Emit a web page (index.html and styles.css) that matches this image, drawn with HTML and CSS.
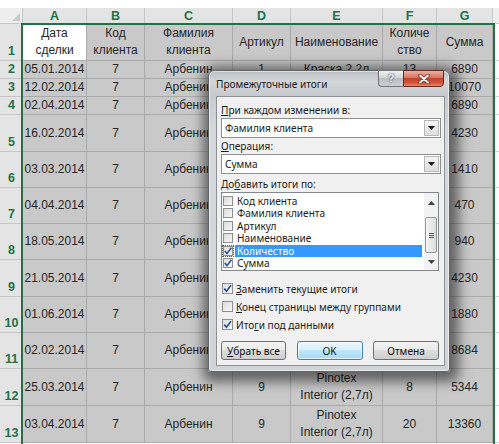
FILE: index.html
```html
<!DOCTYPE html>
<html lang="ru">
<head>
<meta charset="utf-8">
<title>Промежуточные итоги</title>
<link rel="stylesheet" href="styles.css">
</head>
<body>
<div class="page">
  <div class="sheet">
    <div class="corner"></div>
    <div class="ch">A</div><div class="ch">B</div><div class="ch">C</div><div class="ch">D</div><div class="ch">E</div><div class="ch">F</div><div class="ch">G</div><div class="chf"></div>

    <div class="rh">1</div>
    <div class="c a1">Дата<br>сделки</div><div class="c">Код<br>клиента</div><div class="c">Фамилия<br>клиента</div><div class="c">Артикул</div><div class="c">Наименование</div><div class="c">Количе<br>ство</div><div class="c">Сумма</div><div class="f"></div>

    <div class="rh">2</div>
    <div class="c">05.01.2014</div><div class="c">7</div><div class="c">Арбенин</div><div class="c">1</div><div class="c">Краска 2,2л</div><div class="c">13</div><div class="c">6890</div><div class="f"></div>

    <div class="rh">3</div>
    <div class="c">12.02.2014</div><div class="c">7</div><div class="c">Арбенин</div><div class="c"></div><div class="c"></div><div class="c"></div><div class="c">10070</div><div class="f"></div>

    <div class="rh">4</div>
    <div class="c">02.04.2014</div><div class="c">7</div><div class="c">Арбенин</div><div class="c"></div><div class="c"></div><div class="c"></div><div class="c">6890</div><div class="f"></div>

    <div class="rh">5</div>
    <div class="c">16.02.2014</div><div class="c">7</div><div class="c">Арбенин</div><div class="c"></div><div class="c"></div><div class="c"></div><div class="c">4230</div><div class="f"></div>

    <div class="rh">6</div>
    <div class="c">03.03.2014</div><div class="c">7</div><div class="c">Арбенин</div><div class="c"></div><div class="c"></div><div class="c"></div><div class="c">1410</div><div class="f"></div>

    <div class="rh">7</div>
    <div class="c">04.04.2014</div><div class="c">7</div><div class="c">Арбенин</div><div class="c"></div><div class="c"></div><div class="c"></div><div class="c">470</div><div class="f"></div>

    <div class="rh">8</div>
    <div class="c">18.05.2014</div><div class="c">7</div><div class="c">Арбенин</div><div class="c"></div><div class="c"></div><div class="c"></div><div class="c">940</div><div class="f"></div>

    <div class="rh">9</div>
    <div class="c">21.05.2014</div><div class="c">7</div><div class="c">Арбенин</div><div class="c"></div><div class="c"></div><div class="c"></div><div class="c">4230</div><div class="f"></div>

    <div class="rh">10</div>
    <div class="c">01.06.2014</div><div class="c">7</div><div class="c">Арбенин</div><div class="c"></div><div class="c"></div><div class="c"></div><div class="c">1880</div><div class="f"></div>

    <div class="rh">11</div>
    <div class="c">02.02.2014</div><div class="c">7</div><div class="c">Арбенин</div><div class="c"></div><div class="c"></div><div class="c"></div><div class="c">8684</div><div class="f"></div>

    <div class="rh">12</div>
    <div class="c">25.03.2014</div><div class="c">7</div><div class="c">Арбенин</div><div class="c">9</div><div class="c">Pinotex<br>Interior (2,7л)</div><div class="c">8</div><div class="c">5344</div><div class="f"></div>

    <div class="rh">13</div>
    <div class="c">03.04.2014</div><div class="c">7</div><div class="c">Арбенин</div><div class="c">9</div><div class="c">Pinotex<br>Interior (2,7л)</div><div class="c">20</div><div class="c">13360</div><div class="f"></div>

    <div class="sel"></div>
  </div>

  <div class="dialog">
    <div class="titlebar">
      <div class="title">Промежуточные итоги</div>
      <div class="tbtns">
        <div class="help">?</div>
        <div class="close">
          <svg width="12" height="10" viewBox="0 0 12 10"><path d="M2 1.5 L10 8.5 M10 1.5 L2 8.5" stroke="#6a2418" stroke-width="3.6" stroke-linecap="round" fill="none"/><path d="M2 1.5 L10 8.5 M10 1.5 L2 8.5" stroke="#ffffff" stroke-width="2" stroke-linecap="round" fill="none"/></svg>
        </div>
      </div>
    </div>
    <div class="client">
      <div class="label"><u>П</u>ри каждом изменении в:</div>
      <div class="combo"><span class="cval">Фамилия клиента</span><div class="drop"><svg width="7" height="4" viewBox="0 0 7 4"><polygon points="0,0 7,0 3.5,4" fill="#1a1a1a"/></svg></div></div>
      <div class="label l2"><u>О</u>перация:</div>
      <div class="combo"><span class="cval">Сумма</span><div class="drop"><svg width="7" height="4" viewBox="0 0 7 4"><polygon points="0,0 7,0 3.5,4" fill="#1a1a1a"/></svg></div></div>
      <div class="label l3">До<u>б</u>авить итоги по:</div>
      <div class="listbox">
        <div class="items">
          <div class="item"><span class="cb"></span><span class="it">Код клиента</span></div>
          <div class="item"><span class="cb"></span><span class="it">Фамилия клиента</span></div>
          <div class="item"><span class="cb"></span><span class="it">Артикул</span></div>
          <div class="item"><span class="cb"></span><span class="it">Наименование</span></div>
          <div class="item"><span class="cb on focus"><svg width="10" height="10" viewBox="0 0 10 10"><path d="M1.8 5 L4 7.6 L8.4 1.8" stroke="#2a4b8d" stroke-width="1.5" fill="none"/></svg></span><span class="it selected">Количество</span></div>
          <div class="item"><span class="cb on"><svg width="10" height="10" viewBox="0 0 10 10"><path d="M1.8 5 L4 7.6 L8.4 1.8" stroke="#2a4b8d" stroke-width="1.5" fill="none"/></svg></span><span class="it">Сумма</span></div>
        </div>
        <div class="sb">
          <div class="up"><svg width="7" height="4" viewBox="0 0 7 4"><polygon points="0,4 7,4 3.5,0" fill="#404040"/></svg></div>
          <div class="thumb"><span></span><span></span><span></span></div>
          <div class="down"><svg width="7" height="4" viewBox="0 0 7 4"><polygon points="0,0 7,0 3.5,4" fill="#404040"/></svg></div>
        </div>
      </div>
      <div class="opts">
        <div class="opt"><span class="box"><svg width="11" height="11" viewBox="0 0 11 11"><path d="M2.2 5.6 L4.5 8.2 L9 2.2" stroke="#2a4b8d" stroke-width="1.6" fill="none"/></svg></span><span><u>З</u>аменить текущие итоги</span></div>
        <div class="opt"><span class="box"></span><span><u>К</u>онец страницы между группами</span></div>
        <div class="opt"><span class="box"><svg width="11" height="11" viewBox="0 0 11 11"><path d="M2.2 5.6 L4.5 8.2 L9 2.2" stroke="#2a4b8d" stroke-width="1.6" fill="none"/></svg></span><span>Ито<u>г</u>и под данными</span></div>
      </div>
      <div class="buttons">
        <div class="btn b1"><u>У</u>брать все</div>
        <div class="btn b2 def">OK</div>
        <div class="btn b3">Отмена</div>
      </div>
    </div>
  </div>
</div>
</body>
</html>
```

FILE: styles.css
```css
* { box-sizing: border-box; }
body {
  margin: 0;
  background: #ffffff;
  font-family: "Liberation Sans", Arial, sans-serif;
}
.page {
  position: relative;
  width: 499px;
  height: 444px;
  overflow: hidden;
  background: #ffffff;
}

/* ---------- sheet ---------- */
.sheet {
  position: relative;
  margin-top: 8px;
  display: grid;
  grid-template-columns: 23px 64px 58px 88px 58px 92px 54px 56px 6px;
  grid-template-rows: 16px 37px 18px 18px 18px 37px 36px 36px 36px 37px 36px 36px 37px 37px;
}
.corner {
  position: relative;
  background: #eeeeee;
  border-right: 1px solid #c6c6c6;
  border-bottom: 1px solid #c6c6c6;
}
.corner::after {
  content: "";
  position: absolute;
  right: 2px;
  bottom: 2px;
  width: 0;
  height: 0;
  border-left: 8px solid transparent;
  border-bottom: 8px solid #c9c9c9;
}
.ch {
  background: #e4e4e4;
  border-right: 1px solid #c6c6c6;
  color: #217346;
  font-weight: bold;
  font-size: 12.5px;
  display: flex;
  align-items: center;
  justify-content: center;
}
.chf {
  background: #eeeeee;
  border-bottom: 1px solid #c6c6c6;
}
.rh {
  background: #e4e4e4;
  border-bottom: 1px solid #c6c6c6;
  color: #217346;
  font-weight: bold;
  font-size: 12.5px;
  display: flex;
  align-items: flex-end;
  justify-content: center;
  padding-bottom: 1px;
  line-height: 15px;
}
.c {
  background: #c9c9c9;
  border-right: 1px solid #aaaaaa;
  border-bottom: 1px solid #aaaaaa;
  color: #262626;
  font-size: 12px;
  line-height: 17px;
  display: flex;
  align-items: center;
  justify-content: center;
  text-align: center;
  white-space: nowrap;
}
.a1 { background: #ffffff; }
.f {
  background: #ffffff;
  border-bottom: 1px solid #d4d4d4;
}
.sel {
  position: absolute;
  left: 21px;
  top: 15px;
  width: 474px;
  height: 440px;
  border: 2px solid #217346;
  pointer-events: none;
}

/* ---------- dialog ---------- */
.dialog {
  position: absolute;
  left: 208px;
  top: 70px;
  width: 242px;
  height: 302px;
  border: 1px solid #5f6469;
  border-radius: 6px 6px 3px 3px;
  background: linear-gradient(180deg, #b9bdc2 0, #d3d6d9 10px, #c7cbcf 24px, #d6d9dc 60px, #d2d5d8 100%);
  box-shadow: 2px 3px 12px 7px rgba(0, 0, 0, 0.5), inset 0 0 0 1px rgba(255, 255, 255, 0.5);
  padding: 0 4px 5px 7px;
  display: flex;
  flex-direction: column;
  font-family: "Noto Sans", "Liberation Sans", sans-serif;
  font-size: 10.1px;
  color: #1c1c1c;
}
.titlebar {
  height: 25px;
  display: flex;
}
.title {
  flex: 1;
  align-self: center;
  font-size: 10.1px;
  color: #1a1a1a;
  line-height: 14px;
}
.tbtns {
  display: flex;
  align-self: flex-start;
  margin-top: -1px;
  margin-right: 1px;
}
.help {
  width: 25px;
  height: 17px;
  border: 1px solid #73777c;
  border-right: none;
  border-radius: 0 0 0 4px;
  background: linear-gradient(180deg, #eef0f2 0, #d3d6d9 45%, #b9bdc2 50%, #cdd0d4 100%);
  color: #ffffff;
  font-family: "Liberation Sans", Arial, sans-serif;
  font-weight: bold;
  font-size: 11px;
  line-height: 15px;
  text-align: center;
  text-shadow: 0 0 2px #3c4046, 0 0 1px #3c4046;
}
.close {
  width: 41px;
  height: 17px;
  border: 1px solid #6a2a20;
  border-radius: 0 0 4px 0;
  background: linear-gradient(180deg, #eab1a3 0, #d8745f 45%, #c4402a 50%, #d1563c 80%, #e58a68 100%);
  display: flex;
  align-items: center;
  justify-content: center;
}
.client {
  flex: 1;
  background: #f0f0f0;
  border: 1px solid #8c9198;
  padding: 6px 3px 0 4px;
  display: flex;
  flex-direction: column;
}
.label {
  height: 14px;
  line-height: 14px;
  white-space: nowrap;
}
.l2 { margin-top: 1px; }
.l3 { margin-top: 3px; }
.combo {
  margin-top: 1px;
  height: 20px;
  border: 1px solid #8f8f8f;
  background: #ffffff;
  display: flex;
  align-items: center;
}
.cval {
  flex: 1;
  padding-left: 3px;
  line-height: 14px;
}
.drop {
  width: 15px;
  height: 16px;
  margin-right: 1px;
  border: 1px solid #b8b8b8;
  background: linear-gradient(180deg, #f4f4f4, #dedede);
  display: flex;
  align-items: center;
  justify-content: center;
}

.listbox {
  margin-top: 1px;
  width: 218px;
  height: 79px;
  border: 1px solid #828790;
  background: #ffffff;
  display: flex;
}
.items {
  flex: 1;
  padding: 1.5px 2px 0 1px;
  overflow: hidden;
}
.item {
  height: 12.5px;
  display: flex;
  align-items: center;
}
.cb {
  width: 10px;
  height: 10px;
  border: 1px solid #8e8f8f;
  background: linear-gradient(135deg, #dcdcdc, #f6f6f6);
  flex: none;
  display: flex;
  align-items: center;
  justify-content: center;
}
.cb svg { margin: -1px; }
.cb.focus { outline: 1px dotted #555; outline-offset: 0; }
.it {
  margin-left: 2px;
  padding-left: 2px;
  height: 12.3px;
  line-height: 12.3px;
  flex: 1;
  white-space: nowrap;
}
.it.selected {
  background: #3399ff;
  color: #ffffff;
}
.sb {
  width: 14px;
  background: #f2f2f2;
  display: flex;
  flex-direction: column;
}
.up {
  height: 20px;
  display: flex;
  align-items: center;
  justify-content: center;
}
.thumb {
  margin: 4px 1px 0 1px;
  height: 36px;
  border: 1px solid #979797;
  border-radius: 2px;
  background: linear-gradient(90deg, #f6f6f6, #dcdcdc);
  display: flex;
  flex-direction: column;
  align-items: center;
  justify-content: center;
  gap: 1px;
}
.thumb span {
  display: block;
  width: 5px;
  height: 1px;
  background: #555555;
}
.down {
  flex: 1;
  display: flex;
  align-items: center;
  justify-content: center;
}

.opts {
  margin-top: 9px;
  display: flex;
  flex-direction: column;
  gap: 1px;
}
.opt {
  height: 17px;
  display: flex;
  align-items: center;
  padding-left: 1px;
  white-space: nowrap;
}
.box {
  width: 11px;
  height: 11px;
  border: 1px solid #8e8f8f;
  background: linear-gradient(135deg, #dcdcdc, #f7f7f7);
  margin-right: 3px;
  flex: none;
  display: flex;
  align-items: center;
  justify-content: center;
}
.box svg { margin: -1px; }

.buttons {
  margin-top: 8px;
  display: flex;
  gap: 10.5px;
}
.btn {
  height: 19px;
  border: 1px solid #707070;
  border-radius: 3px;
  background: linear-gradient(180deg, #f3f3f3 0, #ebebeb 45%, #dddddd 50%, #cfcfcf 100%);
  display: flex;
  align-items: center;
  justify-content: center;
  line-height: 14px;
  color: #111111;
}
.b1 { width: 65px; }
.b2 { width: 66px; }
.b3 { width: 66px; }
.def {
  border-color: #3c7fb1;
  background: linear-gradient(180deg, #eaf6fd 0, #d9f0fc 45%, #bee6fd 50%, #a7d9f5 100%);
  box-shadow: inset 0 0 0 1px rgba(255, 255, 255, 0.7);
}
```
